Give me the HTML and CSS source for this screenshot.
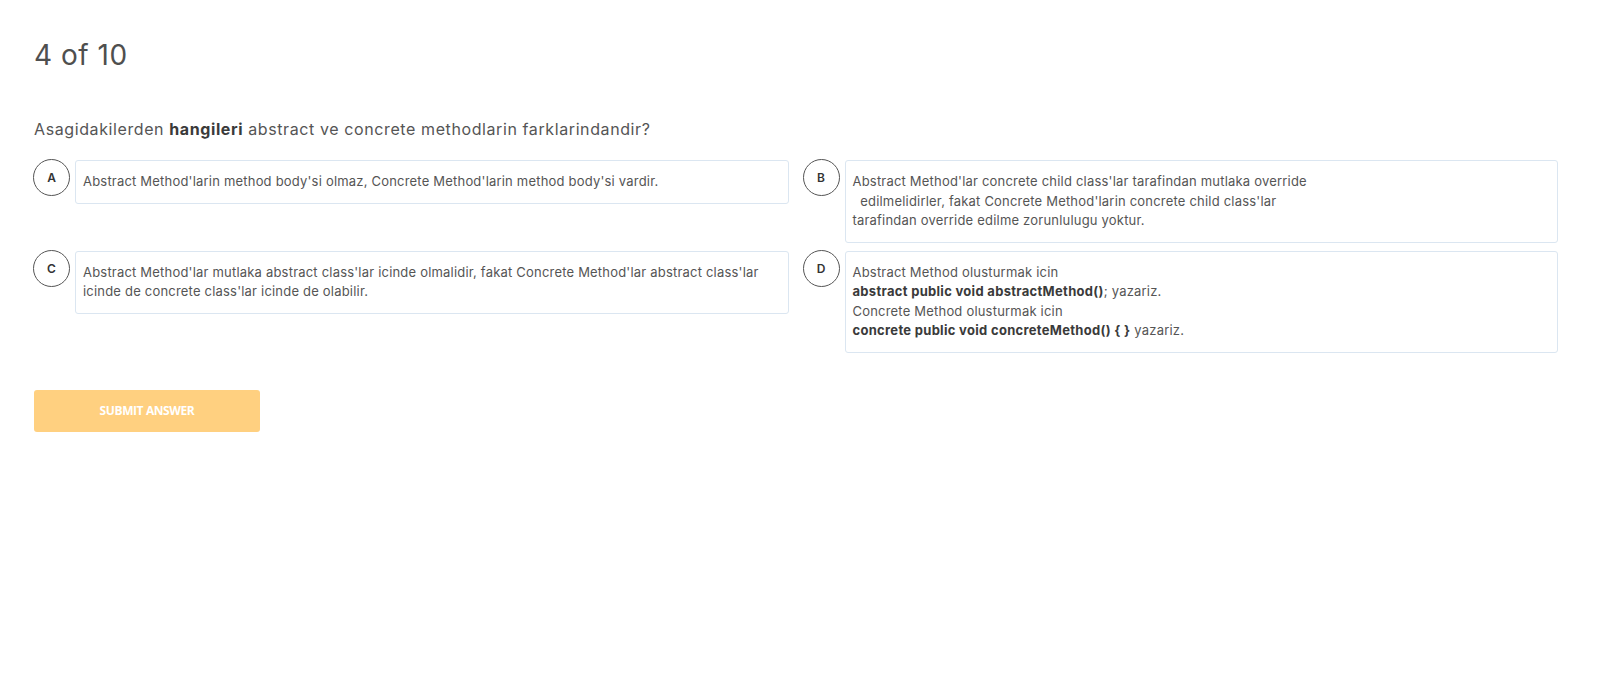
FILE: index.html
```html
<!DOCTYPE html>
<html lang="tr">
<head>
<meta charset="utf-8">
<title>Quiz</title>
<link rel="stylesheet" href="styles.css">
</head>
<body>
<main class="quiz">
  <h1 class="counter">4 of 10</h1>
  <p class="question">Asagidakilerden <strong>hangileri</strong> abstract ve concrete methodlarin farklarindandir?</p>
  <div class="options">
    <div class="option">
      <span class="letter">A</span>
      <div class="answer">Abstract Method'larin method body'si olmaz, Concrete Method'larin method body'si vardir.</div>
    </div>
    <div class="option">
      <span class="letter">B</span>
      <div class="answer">Abstract Method'lar concrete child class'lar tarafindan mutlaka override<br>&nbsp;&nbsp;edilmelidirler, fakat Concrete Method'larin concrete child class'lar<br>tarafindan override edilme zorunlulugu yoktur.</div>
    </div>
    <div class="option">
      <span class="letter">C</span>
      <div class="answer">Abstract Method'lar mutlaka abstract class'lar icinde olmalidir, fakat Concrete Method'lar abstract class'lar icinde de concrete class'lar icinde de olabilir.</div>
    </div>
    <div class="option">
      <span class="letter">D</span>
      <div class="answer">Abstract Method olusturmak icin<br><b>abstract public void abstractMethod()</b>; yazariz.<br>Concrete Method olusturmak icin<br><b>concrete public void concreteMethod() { }</b> yazariz.</div>
    </div>
  </div>
  <button class="submit" type="button">SUBMIT ANSWER</button>
</main>
</body>
</html>
```
FILE: styles.css
```css
html, body {
  margin: 0;
  padding: 0;
  background: #ffffff;
}

body {
  font-family: Inter, "Noto Sans", sans-serif;
  color: #555555;
}

.quiz {
  padding: 38px 47px 40px 33px;
}

.counter {
  margin: 0;
  font-size: 28px;
  font-weight: 400;
  line-height: 34px;
  letter-spacing: 0.5px;
  color: #4f4f4f;
  padding-left: 1px;
}

.question {
  margin: 48px 0 0 1px;
  font-size: 16px;
  line-height: 19px;
  letter-spacing: 0.6px;
  color: #555555;
}

.question strong {
  font-weight: 700;
  color: #3a3a3a;
}

.options {
  display: grid;
  grid-template-columns: 1fr 1fr;
  column-gap: 14px;
  row-gap: 8px;
  margin-top: 21px;
  align-items: start;
}

.option {
  display: flex;
  align-items: flex-start;
  gap: 5px;
}

.letter {
  flex: 0 0 auto;
  width: 35px;
  height: 35px;
  border: 1px solid #555555;
  border-radius: 50%;
  display: flex;
  align-items: center;
  justify-content: center;
  font-size: 12px;
  font-weight: 600;
  color: #333333;
  margin-top: -1px;
}

.answer {
  flex: 1 1 auto;
  border: 1px solid #dbe6f1;
  border-radius: 3px;
  padding: 11px 7px;
  font-size: 13px;
  line-height: 19.5px;
  letter-spacing: 0.2px;
  color: #555555;
}

.answer b {
  font-weight: 700;
  letter-spacing: 0.3px;
  color: #3a3a3a;
}

.submit {
  display: block;
  margin-top: 37px;
  margin-left: 1px;
  width: 226px;
  height: 42px;
  border: none;
  border-radius: 3px;
  background: #ffd080;
  color: #ffffff;
  font-family: "Open Sans", sans-serif;
  font-size: 12px;
  font-weight: 700;
  letter-spacing: -0.4px;
  padding: 0;
  cursor: pointer;
}
```
